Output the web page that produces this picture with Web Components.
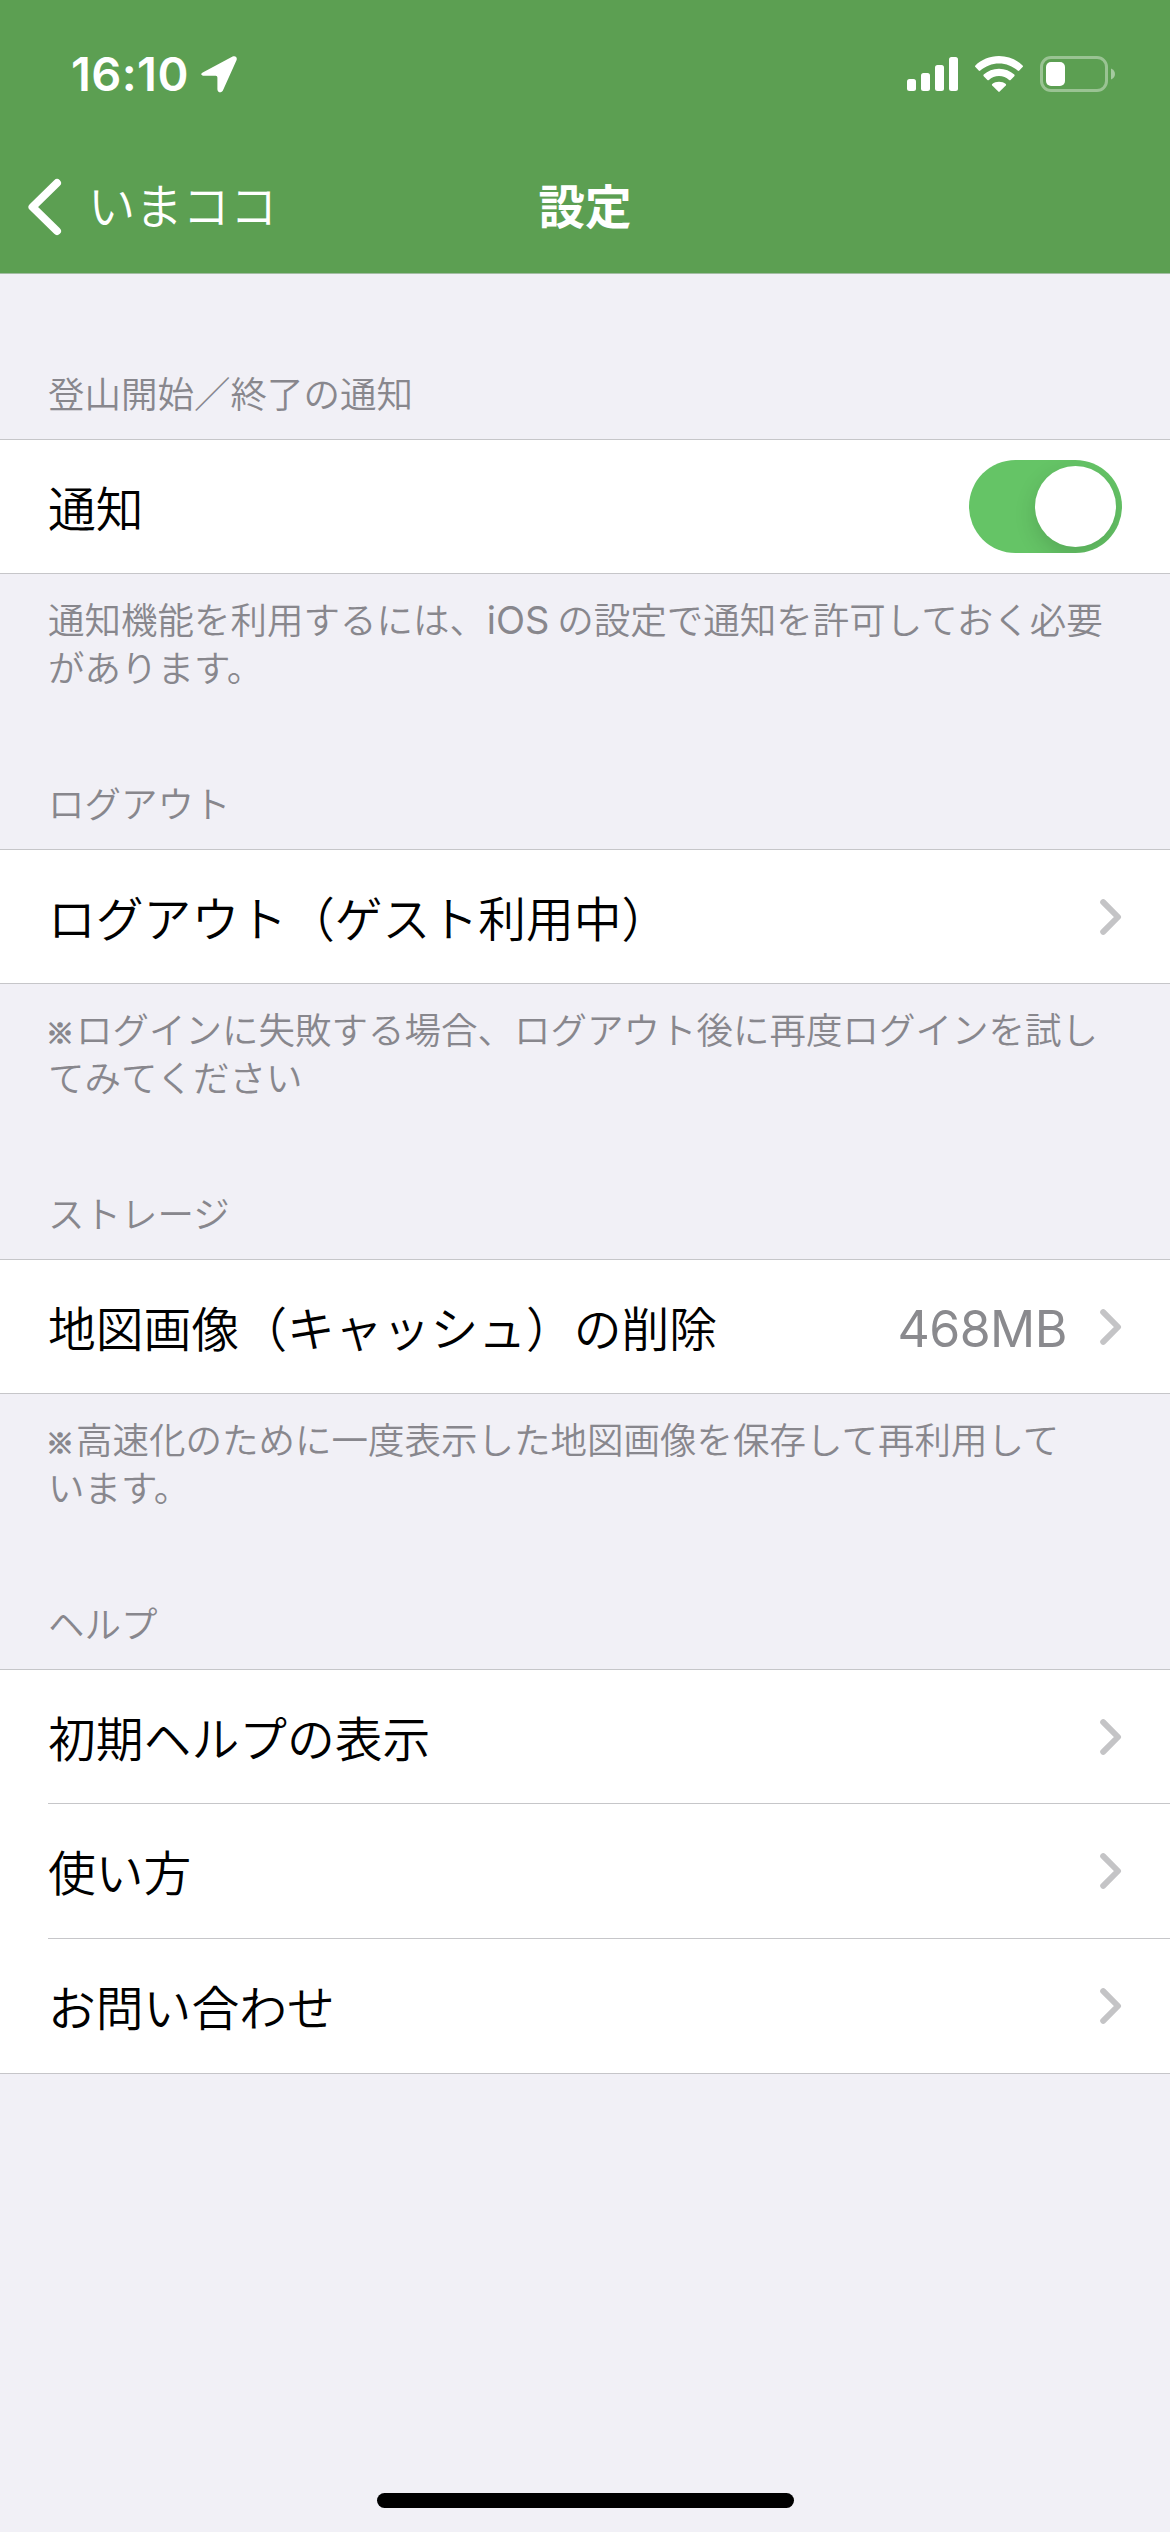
<!DOCTYPE html>
<html lang="ja">
<head>
  <meta charset="UTF-8">
  <title>設定</title>
  <style>
    body {
      margin: 0;
      background: #f1f0f6;
      font-family: "Noto Sans CJK JP", sans-serif;
      font-weight: 350;
    }
  </style>
</head>
<body>
  <settings-screen>
    <status-bar slot="top" time="16:10"></status-bar>
    <nav-bar slot="top" back="いまココ">設定</nav-bar>

    <settings-section header="登山開始／終了の通知">
      <settings-row>通知<toggle-switch slot="end"></toggle-switch></settings-row>
      <span slot="footer">通知機能を利用するには、<latin-text>iOS</latin-text>の設定で通知を許可しておく必要<br>があります。</span>
    </settings-section>

    <settings-section header="ログアウト">
      <settings-row link>ログアウト（ゲスト利用中）</settings-row>
      <span slot="footer"><note-mark></note-mark>ログインに失敗する場合、ログアウト後に再度ログインを試し<br>てみてください</span>
    </settings-section>

    <settings-section header="ストレージ">
      <settings-row link value="468MB">地図画像（キャッシュ）の削除</settings-row>
      <span slot="footer"><note-mark></note-mark>高速化のために一度表示した地図画像を保存して再利用して<br>います。</span>
    </settings-section>

    <settings-section header="ヘルプ">
      <settings-row link>初期ヘルプの表示</settings-row>
      <settings-row link divided>使い方</settings-row>
      <settings-row link divided>お問い合わせ</settings-row>
    </settings-section>
  </settings-screen>

  <script>
    class SettingsScreen extends HTMLElement {
      constructor() {
        super();
        this.attachShadow({ mode: "open" });
        this.shadowRoot.innerHTML = `
          <style>
            :host {
              display: flex;
              flex-direction: column;
              width: 1170px;
              height: 2532px;
              overflow: hidden;
            }
            header {
              background: #5c9f52;
              border-bottom: 1px solid #a3bda3;
            }
            main {
              flex: 1;
              padding-top: 7px;
            }
            .home {
              width: 417px;
              height: 15px;
              margin: 0 auto 24px;
              border-radius: 8px;
              background: #000;
            }
          </style>
          <header><slot name="top"></slot></header>
          <main><slot></slot></main>
          <div class="home"></div>
        `;
      }
    }

    class StatusBar extends HTMLElement {
      constructor() {
        super();
        this.attachShadow({ mode: "open" });
        this.shadowRoot.innerHTML = `
          <style>
            :host {
              display: flex;
              justify-content: space-between;
              align-items: center;
              height: 148px;
              padding: 0 55px 0 71px;
              box-sizing: border-box;
              color: #fff;
            }
            .left {
              display: flex;
              align-items: center;
            }
            .time {
              width: 130px;
              font: 600 47px/56px Inter, sans-serif;
              letter-spacing: 0.4px;
            }
            .icons {
              display: flex;
              align-items: center;
            }
            svg {
              display: block;
              fill: #fff;
            }
            .signal { margin-right: 17px; }
            .wifi { margin-right: 17px; }
          </style>
          <div class="left">
            <div class="time">${this.getAttribute("time")}</div>
            <svg width="36" height="38" viewBox="0 0 36 38">
              <path d="M2.2 17.2 31.6 1.6C34.4 .2 36.6 2.4 35.5 5.3L21.9 35.5C20.4 38.4 16.4 37.6 16.4 34.2V22.4Q16.4 20.8 14.8 20.8H3.4C-.3 20.8-.8 18.7 2.2 17.2Z"/>
            </svg>
          </div>
          <div class="icons">
            <svg class="signal" width="51" height="36" viewBox="0 0 51 36">
              <rect x="0" y="23" width="9" height="12" rx="2.5"/>
              <rect x="14" y="17" width="9" height="18" rx="2.5"/>
              <rect x="28" y="9" width="9" height="26" rx="2.5"/>
              <rect x="42" y="1" width="9" height="34" rx="2.5"/>
            </svg>
            <svg class="wifi" width="48" height="38" viewBox="0 0 48 38">
              <path d="M24 1C33.3 1 41.6 4.6 47.6 10.4Q48.4 11.2 47.6 12L44.3 15.6Q43.5 16.3 42.7 15.6C37.7 11 31.1 8.4 24 8.4S10.3 11 5.3 15.6Q4.5 16.3 3.7 15.6L.4 12Q-.4 11.2 .4 10.4C6.4 4.6 14.7 1 24 1Z"/>
              <path d="M24 13.7C30 13.7 35.3 15.9 39.3 19.6Q40.1 20.4 39.3 21.2L35.6 24.9Q34.9 25.6 34.1 24.9C31.4 22.5 27.9 21.1 24 21.1S16.6 22.5 13.9 24.9Q13.1 25.6 12.4 24.9L8.7 21.2Q7.9 20.4 8.7 19.6C12.7 15.9 18 13.7 24 13.7Z"/>
              <path d="M24 26.7C26.6 26.7 29 27.5 30.8 28.9Q31.5 29.6 30.8 30.4L24.7 36.6Q24 37.3 23.3 36.6L17.2 30.4Q16.5 29.6 17.2 28.9C19 27.5 21.4 26.7 24 26.7Z"/>
            </svg>
            <svg width="75" height="36" viewBox="0 0 75 36">
              <rect x="1.5" y="1.5" width="65" height="33" rx="9.5" fill="none" stroke="#fff" stroke-width="3" opacity=".38"/>
              <path d="M71 12.5C76.3 14.5 76.3 21.5 71 23.5Z" opacity=".45"/>
              <rect x="6" y="6" width="19" height="24" rx="5"/>
            </svg>
          </div>
        `;
      }
    }

    class NavBar extends HTMLElement {
      constructor() {
        super();
        this.attachShadow({ mode: "open" });
        this.shadowRoot.innerHTML = `
          <style>
            :host {
              display: grid;
              grid-template-columns: 1fr auto 1fr;
              align-items: center;
              height: 125px;
              padding: 0 28px 13px;
              box-sizing: border-box;
              color: #fff;
              font-size: 47.3px;
              line-height: 60px;
            }
            .back {
              display: flex;
              align-items: center;
              gap: 26px;
            }
            .title {
              font-size: 46.5px;
              font-weight: 700;
            }
            svg { margin-top: 5px; }
            path {
              fill: none;
              stroke: #fff;
              stroke-width: 8;
              stroke-linecap: round;
              stroke-linejoin: round;
            }
          </style>
          <div class="back">
            <svg width="34" height="58" viewBox="0 0 34 58">
              <path d="M29 5 4.5 29 29 53"/>
            </svg>
            <span>${this.getAttribute("back")}</span>
          </div>
          <div class="title"><slot></slot></div>
        `;
      }
    }

    class SettingsSection extends HTMLElement {
      constructor() {
        super();
        this.attachShadow({ mode: "open" });
        this.shadowRoot.innerHTML = `
          <style>
            :host { display: block; }
            .header, .footer {
              padding: 88px 48px 22px;
              font-size: 36.5px;
              line-height: 48px;
              color: #88878d;
            }
            .footer {
              padding: 21px 0 0 48px;
              white-space: nowrap;
            }
            .rows {
              background: #fff;
              border-top: 1px solid #c6c6c9;
              border-bottom: 1px solid #c6c6c9;
            }
          </style>
          <div class="header">${this.getAttribute("header")}</div>
          <div class="rows"><slot></slot></div>
          <div class="footer"><slot name="footer"></slot></div>
        `;
      }
    }

    class SettingsRow extends HTMLElement {
      constructor() {
        super();
        this.attachShadow({ mode: "open" });
        const value = this.getAttribute("value") || "";
        const chevron = `
          <svg width="22" height="36" viewBox="0 0 22 36">
            <path d="M3.2 3.2 18 18 3.2 32.8"/>
          </svg>`;
        this.shadowRoot.innerHTML = `
          <style>
            :host {
              display: block;
              padding-left: 48px;
            }
            .row {
              display: flex;
              align-items: center;
              height: 133px;
              padding-right: 48px;
              font-size: 47.8px;
              line-height: 60px;
              color: #000;
            }
            :host([divided]) .row {
              height: 134px;
              border-top: 1px solid #c6c6c9;
            }
            .label { flex: 1; }
            .value {
              margin-right: 33px;
              padding-top: 5px;
              font: 400 50px/60px Inter, sans-serif;
              letter-spacing: -0.5px;
              color: #8a8a8e;
            }
            path {
              fill: none;
              stroke: #c4c4c6;
              stroke-width: 6;
              stroke-linecap: round;
              stroke-linejoin: round;
            }
          </style>
          <div class="row">
            <span class="label"><slot></slot></span>
            <span class="value">${value}</span>
            <slot name="end"></slot>
            ${this.hasAttribute("link") ? chevron : ""}
          </div>
        `;
      }
    }

    class ToggleSwitch extends HTMLElement {
      constructor() {
        super();
        this.attachShadow({ mode: "open" });
        this.shadowRoot.innerHTML = `
          <style>
            :host {
              display: flex;
              justify-content: flex-end;
              width: 153px;
              height: 93px;
              padding: 6px;
              box-sizing: border-box;
              border-radius: 47px;
              background: #65c466;
              overflow: hidden;
            }
            .knob {
              width: 81px;
              height: 81px;
              border-radius: 50%;
              background: #fff;
              box-shadow: 0 8px 22px rgba(0, 0, 0, 0.14);
            }
          </style>
          <div class="knob"></div>
        `;
      }
    }

    // latin words inside japanese text, pulled in after the wide comma
    class LatinText extends HTMLElement {
      constructor() {
        super();
        this.attachShadow({ mode: "open" });
        this.shadowRoot.innerHTML = `
          <style>
            :host {
              margin: 0 8px 0 -10px;
              font: 400 38px/1 Inter, sans-serif;
            }
          </style><slot></slot>`;
      }
    }

    class NoteMark extends HTMLElement {
      constructor() {
        super();
        this.attachShadow({ mode: "open" });
        this.shadowRoot.innerHTML = `
          <style>
            :host {
              display: inline-block;
              width: 28px;
              font-size: 28px;
              line-height: 1;
              text-indent: -2px;
              -webkit-text-stroke: 1.2px currentColor;
            }
          </style>※`;
      }
    }

    customElements.define("settings-screen", SettingsScreen);
    customElements.define("status-bar", StatusBar);
    customElements.define("nav-bar", NavBar);
    customElements.define("settings-section", SettingsSection);
    customElements.define("settings-row", SettingsRow);
    customElements.define("toggle-switch", ToggleSwitch);
    customElements.define("latin-text", LatinText);
    customElements.define("note-mark", NoteMark);
  </script>
</body>
</html>
